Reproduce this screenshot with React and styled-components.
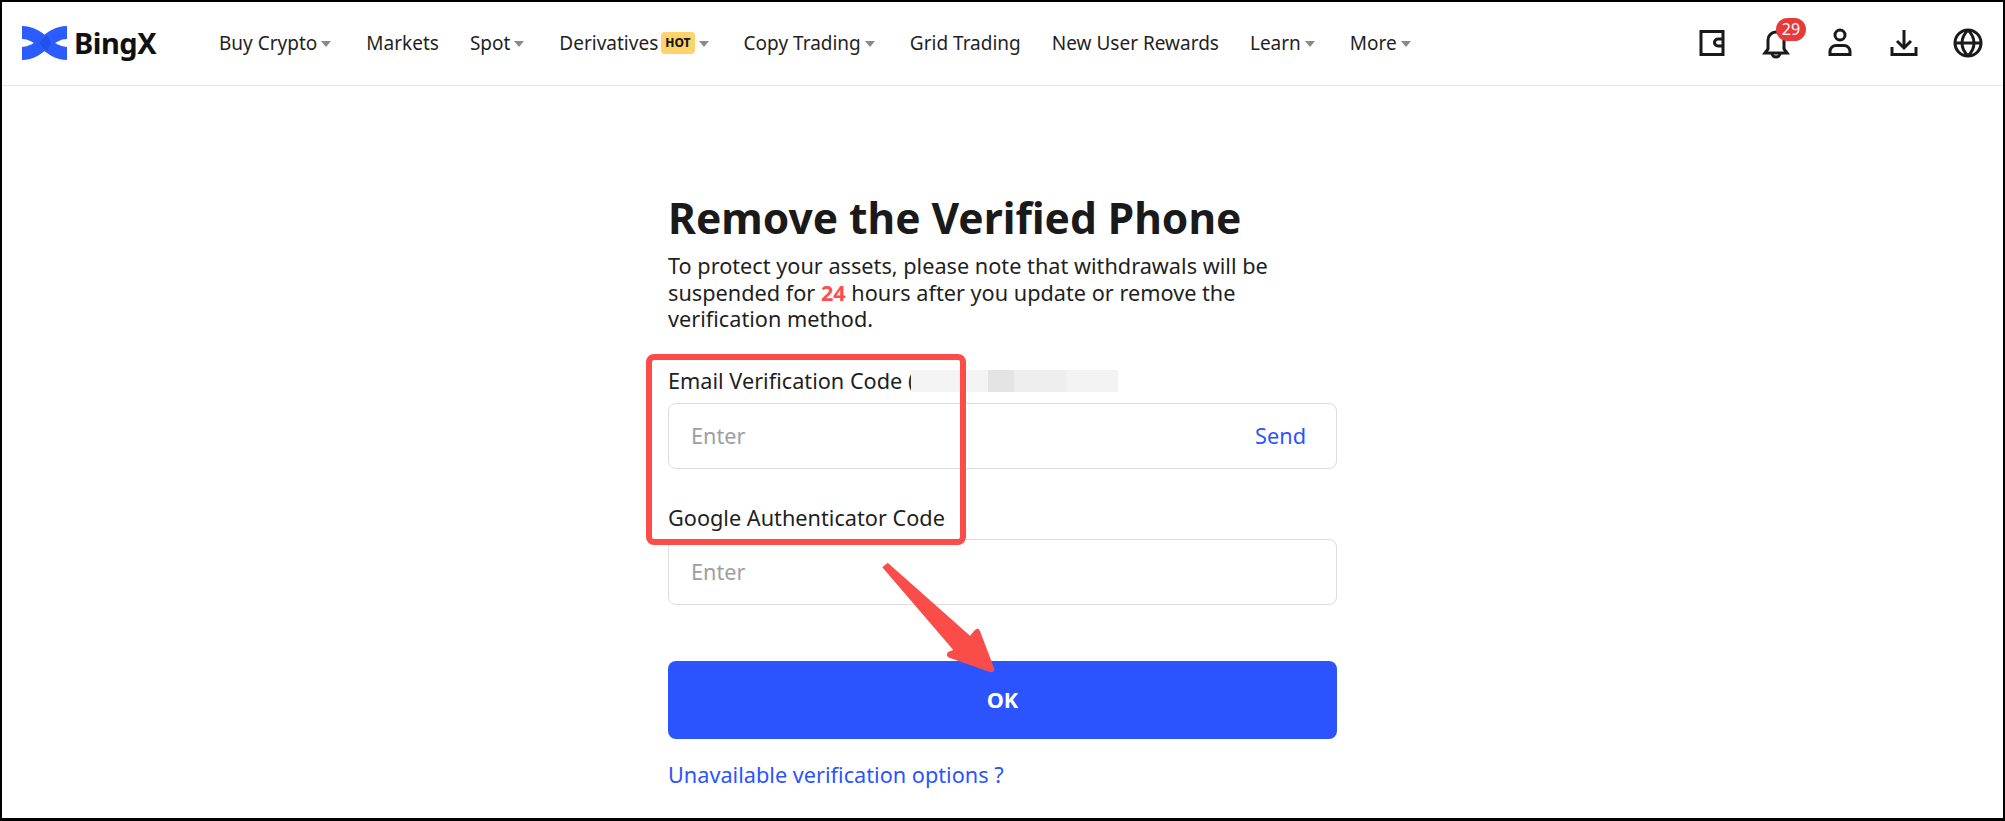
import React from "react";
import styled, { createGlobalStyle } from "styled-components";

const GlobalStyle = createGlobalStyle`
  html, body {
    margin: 0;
    padding: 0;
    background: #fff;
  }
  * {
    box-sizing: border-box;
  }
`;

const FONT = `"Noto Sans", "Liberation Sans", sans-serif`;

const Frame = styled.div`
  position: relative;
  width: 2005px;
  height: 821px;
  overflow: hidden;
  border: solid #000;
  border-width: 2px 2px 3px 2px;
  background: #fff;
  font-family: ${FONT};
  color: #1a1a1a;
`;

const Header = styled.header`
  display: flex;
  align-items: center;
  height: 84px;
  padding: 0 17px 2px 20px;
  border-bottom: 1px solid #e6e6e6;
`;

const Logo = styled.div`
  display: flex;
  align-items: center;
  gap: 7px;
  width: 197px;
`;

const LogoText = styled.span`
  font-size: 29px;
  font-weight: 700;
  letter-spacing: -0.5px;
  color: #111;
`;

const Nav = styled.nav`
  display: flex;
  align-items: center;
  gap: 31px;
  flex: 1;
`;

const NavItem = styled.div`
  display: flex;
  align-items: center;
  font-size: 19px;
  color: #1f1f1f;
  white-space: nowrap;
`;

const Caret = styled.span`
  width: 0;
  height: 0;
  margin: 2px 4px 0 4px;
  border-left: 5px solid transparent;
  border-right: 5px solid transparent;
  border-top: 6px solid #8a8a8a;
`;

const HotTag = styled.span`
  margin-left: 3px;
  padding: 0 4px;
  height: 22px;
  line-height: 22px;
  border-radius: 4px;
  background: #ffd36b;
  font-size: 12px;
  font-weight: 800;
  color: #1a1a1a;
`;

const IconRow = styled.div`
  display: flex;
  align-items: center;
  gap: 28px;
`;

const IconBox = styled.div`
  position: relative;
  width: 36px;
  height: 36px;
  display: flex;
  align-items: center;
  justify-content: center;
`;

const Badge = styled.span`
  position: absolute;
  top: -7px;
  left: 18px;
  height: 23px;
  min-width: 30px;
  padding: 0 5px;
  border-radius: 12px;
  background: #e83a3a;
  color: #fff;
  font-size: 16px;
  line-height: 23px;
  text-align: center;
`;

const Main = styled.main`
  width: 669px;
  margin-left: 666px;
  padding-top: 104px;
`;

const Title = styled.h1`
  margin: 0;
  font-size: 42.5px;
  line-height: 56px;
  font-weight: 700;
  color: #1a1a1a;
`;

const Intro = styled.p`
  margin: 7px 0 0;
  font-size: 21.7px;
  line-height: 26.5px;
  color: #1f1f1f;
`;

const Strong = styled.b`
  color: #ff4d4f;
  font-weight: 700;
`;

const Field = styled.div`
  margin-top: ${(p) => p.$top}px;
`;

const Label = styled.div`
  display: flex;
  align-items: center;
  height: 28px;
  font-size: 21.7px;
  color: #1f1f1f;
`;

const Blur = styled.span`
  width: 207px;
  height: 22px;
  margin-left: -3px;
  background: linear-gradient(90deg, #f4f4f4 0 37%, #e4e4e4 37% 50%, #eeeeee 50% 75%, #f3f3f3 75% 100%);
`;

const InputBox = styled.div`
  display: flex;
  align-items: center;
  justify-content: space-between;
  height: 66px;
  margin-top: ${(p) => p.$gap}px;
  padding: 0 30px 0 22px;
  border: 1.5px solid #dedede;
  border-radius: 8px;
  font-size: 21.7px;
`;

const Placeholder = styled.span`
  color: #9e9e9e;
`;

const SendLink = styled.span`
  color: #2b54ff;
`;

const OkButton = styled.button`
  display: block;
  width: 100%;
  height: 78px;
  margin-top: 56px;
  border: 0;
  border-radius: 8px;
  background: #2b54ff;
  color: #fff;
  font-family: ${FONT};
  font-size: 21.7px;
  font-weight: 700;
`;

const HelpLink = styled.a`
  display: block;
  margin-top: 22px;
  font-size: 21.7px;
  line-height: 28px;
  color: #2b54ff;
`;

const RedBox = styled.div`
  position: absolute;
  left: 644px;
  top: 352px;
  width: 320px;
  height: 191px;
  border: 6px solid #fa4d4a;
  border-radius: 8px;
`;

const Arrow = styled.svg`
  position: absolute;
  left: 878px;
  top: 558px;
`;

const Stroke = ({ children, size = 36 }) => (
  <svg width={size} height={size} viewBox="0 0 36 36" fill="none" stroke="#1a1a1a" strokeWidth="3">
    {children}
  </svg>
);

const NAV = [
  { label: "Buy Crypto", caret: true },
  { label: "Markets" },
  { label: "Spot", caret: true },
  { label: "Derivatives", hot: true, caret: true },
  { label: "Copy Trading", caret: true },
  { label: "Grid Trading" },
  { label: "New User Rewards" },
  { label: "Learn", caret: true },
  { label: "More", caret: true },
];

const App = () => (
  <>
    <GlobalStyle />
    <Frame>
      <Header>
        <Logo>
          <svg width="45" height="34" viewBox="0 0 45 34" fill="none" strokeWidth="13">
            <path d="M0 6.5C19 6.5 26 27.5 45 27.5" stroke="#2b5cff" />
            <path d="M0 27.5C19 27.5 26 6.5 45 6.5" stroke="#2b5cff" />
            <path d="M17 17C19.5 14.5 22.5 11 25 9L29 17L25 25C22.5 23 19.5 19.5 17 17Z" fill="#2450ea" stroke="none" />
          </svg>
          <LogoText>BingX</LogoText>
        </Logo>
        <Nav>
          {NAV.map((item) => (
            <NavItem key={item.label}>
              {item.label}
              {item.hot && <HotTag>HOT</HotTag>}
              {item.caret && <Caret />}
            </NavItem>
          ))}
        </Nav>
        <IconRow>
          <IconBox>
            <Stroke>
              <path d="M7 6.5h22v23H7z" />
              <path d="M29 14h-5a3.5 3.5 0 0 0 0 7h5" />
            </Stroke>
          </IconBox>
          <IconBox>
            <Stroke>
              <path d="M10 24V15a8 8 0 0 1 16 0v9l3 4H7z" />
              <path d="M14 28a4 4 0 0 0 8 0" />
            </Stroke>
            <Badge>29</Badge>
          </IconBox>
          <IconBox>
            <Stroke>
              <circle cx="18" cy="10" r="5" />
              <path d="M8 29.5v-3a6 6 0 0 1 6-6h8a6 6 0 0 1 6 6v3z" />
            </Stroke>
          </IconBox>
          <IconBox>
            <Stroke>
              <path d="M18 5v18M11 16l7 7 7-7M6 22v7.5h24V22" />
            </Stroke>
          </IconBox>
          <IconBox>
            <Stroke>
              <circle cx="18" cy="18" r="13" />
              <path d="M5 18h26M18 5c-8 8-8 18 0 26M18 5c8 8 8 18 0 26" />
            </Stroke>
          </IconBox>
        </IconRow>
      </Header>
      <Main>
        <Title>Remove the Verified Phone</Title>
        <Intro>
          To protect your assets, please note that withdrawals will be suspended for <Strong>24</Strong> hours after you
          update or remove the verification method.
        </Intro>
        <Field $top={34}>
          <Label>
            Email Verification Code (<Blur />
          </Label>
          <InputBox $gap={8}>
            <Placeholder>Enter</Placeholder>
            <SendLink>Send</SendLink>
          </InputBox>
        </Field>
        <Field $top={35}>
          <Label>Google Authenticator Code</Label>
          <InputBox $gap={7}>
            <Placeholder>Enter</Placeholder>
          </InputBox>
        </Field>
        <OkButton>OK</OkButton>
        <HelpLink>Unavailable verification options ?</HelpLink>
      </Main>
      <RedBox />
      <Arrow width="120" height="120" viewBox="0 0 120 120">
        <path
          d="M2.3 7.3L7.7 2.7L90 75.7L94 71Q98 66 100 71L114 108Q115 113 110 112L70 98Q65 96 68 92L73.3 90Z"
          fill="#fa4d4a"
        />
      </Arrow>
    </Frame>
  </>
);

export default App;
